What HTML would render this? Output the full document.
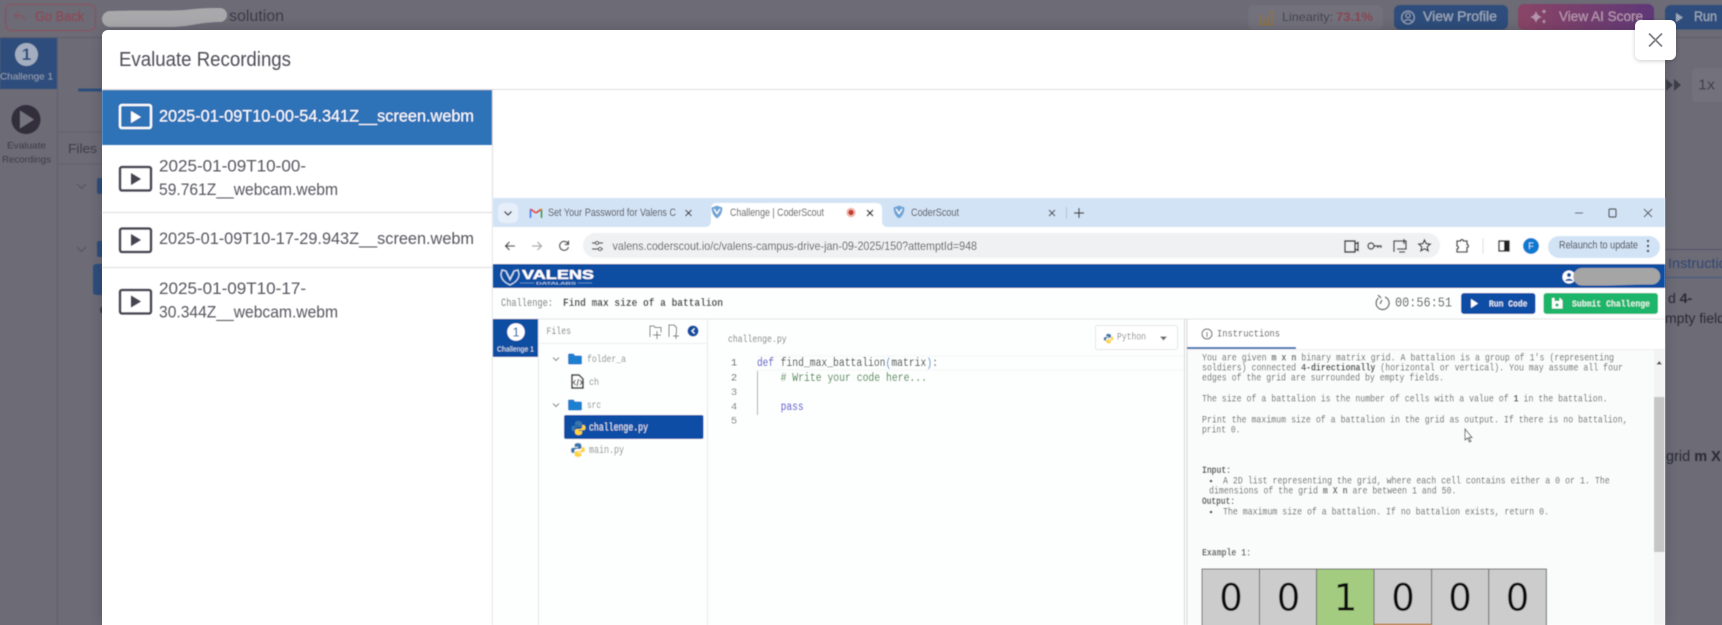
<!DOCTYPE html>
<html lang="en">
<head>
<meta charset="utf-8">
<title>Evaluate Recordings</title>
<style>
html,body{margin:0;padding:0;width:1722px;height:625px;overflow:hidden;background:#6c6b76}
svg{display:block}
text{font-family:"Liberation Sans",sans-serif;dominant-baseline:central;white-space:pre}
.m text,text.m{font-family:"Liberation Mono",monospace;transform:translateY(1px)}
.li{font-size:17px;fill:#56565f}
</style>
</head>
<body>
<svg xmlns="http://www.w3.org/2000/svg" width="1722" height="625" viewBox="0 0 1722 625">
<defs>
<filter id="b1" x="-2%" y="-2%" width="104%" height="104%"><feGaussianBlur stdDeviation="0.6"/></filter>
<filter id="b2" x="-2%" y="-2%" width="104%" height="104%"><feGaussianBlur stdDeviation="0.4"/></filter>
<filter id="sh" x="-5%" y="-10%" width="110%" height="120%"><feDropShadow dx="0" dy="0" stdDeviation="7" flood-color="#000" flood-opacity=".18"/></filter>
<filter id="shc" x="-40%" y="-40%" width="180%" height="180%"><feDropShadow dx="0" dy="1" stdDeviation="2.5" flood-color="#000" flood-opacity=".2"/></filter>
<linearGradient id="ai" x1="0" x2="1" y1="0" y2="0"><stop offset="0" stop-color="#8a4566"/><stop offset="1" stop-color="#5f3878"/></linearGradient>
<g id="py"><path fill="#3776ab" d="M8 1C5 1 4.500 2.200 4.500 3.500V5H8v.7H3C1.500 5.700 1 7 1 8.200S1.500 11 3 11h1.300V9.200c0-1.200 1-2.200 2.200-2.200h3.200c1 0 1.800-.8 1.800-1.800V3.500C11.500 2 10 1 8 1z"/><path fill="#ffd43b" d="M8 15c3 0 3.500-1.200 3.500-2.500V11H8v-.7h5c1.500 0 2-1.300 2-2.500S14.500 5 13 5h-1.300v1.800c0 1.200-1 2.200-2.200 2.200H6.300c-1 0-1.800.8-1.800 1.800v1.700C4.500 14 6 15 8 15z"/></g>
<path id="fold" d="M0 2a1.500 1.500 0 0 1 1.500-1.500h4L7 2.500h5.500A1.500 1.500 0 0 1 14 4v6a1.500 1.500 0 0 1-1.500 1.500h-11A1.500 1.500 0 0 1 0 10z" fill="#1c7fd0"/>
<g id="shield"><path d="M0-6.500L5.500-4.500C5.500 0 4 4 0 6.500C-4 4-5.500 0-5.500-4.500z" fill="#6ea5d6"/><path d="M-3-3L0 1.500L3-3" fill="none" stroke="#fff" stroke-width="1.200"/></g>
</defs>

<!-- dimmed page behind -->
<rect width="1722" height="625" fill="#6c6b76"/>
<g filter="url(#b2)">
<line x1="0" y1="37.500" x2="1722" y2="37.500" stroke="#5f5e69"/>
<rect x="5.500" y="4.500" width="90" height="26" rx="6" fill="none" stroke="#8f505c" stroke-width="1.100"/>
<path d="M25 20.500c-.5-3-2.500-5-6-5h-4M18 12l-3.500 3.500L18 19" fill="none" stroke="#8f505c" stroke-width="1"/>
<text x="35" y="16" font-size="14" fill="#8f4854" stroke="#8f4854" stroke-width=".2" textLength="49" lengthAdjust="spacingAndGlyphs">Go Back</text>
<text x="229" y="16.500" font-size="15.500" fill="#3c3b46" textLength="55" lengthAdjust="spacingAndGlyphs">solution</text>
<path d="M110 11C140 10 170 11 185 10C200 8 210 8 220 8a6.500 6.500 0 0 1 0 14C200 22 190 27 170 27H110a8 8 0 0 1 0-16z" fill="#a9a9ac"/>
<rect x="0" y="38" width="57" height="51" fill="#2f4d7c"/>
<circle cx="26.500" cy="54.500" r="11.500" fill="#a3aec0"/>
<text x="26.500" y="54.500" font-size="17" font-weight="700" fill="#2f4d7c" text-anchor="middle">1</text>
<text x="0" y="77" font-size="9.500" fill="#8f9cb1" textLength="53" lengthAdjust="spacingAndGlyphs">Challenge 1</text>
<line x1="57.500" y1="38" x2="57.500" y2="625" stroke="#62616c"/>
<circle cx="26" cy="119.500" r="14.500" fill="#302f3b"/>
<path d="M20 110.500L34 119.500L20 128.500z" fill="#75747f"/>
<text x="7" y="146" font-size="9.500" fill="#3d3c48" textLength="39" lengthAdjust="spacingAndGlyphs">Evaluate</text>
<text x="2" y="160" font-size="9.500" fill="#3d3c48" textLength="49" lengthAdjust="spacingAndGlyphs">Recordings</text>
<rect x="78" y="88.500" width="26" height="3" rx="1.500" fill="#2f4d7c"/>
<line x1="58" y1="132" x2="102" y2="132" stroke="#62616c"/>
<line x1="58" y1="164" x2="102" y2="164" stroke="#62616c"/>
<text x="68" y="148.500" font-size="13" fill="#3d3c48" textLength="29" lengthAdjust="spacingAndGlyphs">Files</text>
<path d="M77 184l4.500 4.500L86 184M77 247l4.500 4.500L86 247" fill="none" stroke="#55545f" stroke-width="1"/>
<rect x="97" y="178" width="8" height="16" rx="2" fill="#2f4d7c"/>
<rect x="97" y="241" width="8" height="16" rx="2" fill="#2f4d7c"/>
<rect x="93" y="264" width="14" height="31" rx="3" fill="#2f4d7c"/>
<circle cx="104" cy="310" r="4" fill="#3d3c48"/>
<!-- top right -->
<rect x="1248" y="5" width="135" height="25" rx="6" fill="#72717b"/>
<path d="M1260 14v10M1264 18v6M1268 15v9M1272 12v12M1258.500 24.500h15" fill="none" stroke="#8f7340" stroke-width="1.500"/>
<path d="M1270 12h4M1272 10v4" stroke="#8f7340" stroke-width="1"/>
<text x="1282" y="17" font-size="12" fill="#41404c" textLength="51" lengthAdjust="spacingAndGlyphs">Linearity:</text>
<text x="1336" y="17" font-size="12" font-weight="700" fill="#8a4350" textLength="37" lengthAdjust="spacingAndGlyphs">73.1%</text>
<rect x="1394" y="5" width="114" height="24.500" rx="6" fill="#2f4d7c"/>
<circle cx="1408" cy="17.500" r="6.300" fill="none" stroke="#9aa6b9" stroke-width="1.100"/>
<circle cx="1408" cy="15.500" r="2.200" fill="none" stroke="#9aa6b9"/>
<path d="M1404 22c1-3 7-3 8 0" fill="none" stroke="#9aa6b9"/>
<text x="1423" y="16.500" font-size="13.500" fill="#9aa6b9" stroke="#9aa6b9" stroke-width=".2" textLength="74" lengthAdjust="spacingAndGlyphs">View Profile</text>
<rect x="1518" y="4" width="136" height="26" rx="6" fill="url(#ai)"/>
<path d="M1536 11q1 5 6 6q-5 1-6 6q-1-5-6-6q5-1 6-6zM1544 9q.500 2 2.500 2.500q-2 .500-2.500 2.500q-.500-2-2.500-2.500q2-.500 2.500-2.500zM1544 19q.500 2 2 2.500q-1.500 .500-2 2.500q-.500-2-2-2.500q1.500-.500 2-2.500z" fill="#b595ad"/>
<text x="1559" y="16.500" font-size="13.500" fill="#b595ad" stroke="#b595ad" stroke-width=".2" textLength="84" lengthAdjust="spacingAndGlyphs">View AI Score</text>
<rect x="1665" y="5" width="70" height="24.500" rx="6" fill="#2f4d7c"/>
<path d="M1676 13l7 4.500l-7 4.500z" fill="#9aa6b9"/>
<text x="1694" y="16.500" font-size="13.500" fill="#9aa6b9" stroke="#9aa6b9" stroke-width=".2" textLength="23" lengthAdjust="spacingAndGlyphs">Run</text>
<path d="M1666 79l7 6l-7 6zM1674 79l7 6l-7 6z" fill="#3d3c48"/>
<rect x="1692" y="68" width="40" height="34" rx="4" fill="#72717b"/>
<text x="1698" y="85" font-size="15" fill="#3d3c48" textLength="17" lengthAdjust="spacingAndGlyphs">1x</text>
<line x1="1665" y1="249.500" x2="1722" y2="249.500" stroke="#54536a"/>
<line x1="1665" y1="277.500" x2="1722" y2="277.500" stroke="#3f5a86"/>
<text x="1668" y="263" font-size="14" fill="#33476f" textLength="74" lengthAdjust="spacingAndGlyphs">Instructions</text>
<text x="1668" y="298" font-size="14" fill="#2b2a36"><tspan>d </tspan><tspan font-weight="700">4-</tspan></text>
<text x="1665" y="318" font-size="14" fill="#2b2a36">mpty fields</text>
<text x="1666" y="457" font-size="14.500" fill="#2b2a36">grid <tspan font-weight="700">m X</tspan></text>
</g>

<!-- modal -->
<path d="M102 625V36a6 6 0 0 1 6-6H1665V625z" fill="#fff" filter="url(#sh)"/>
<g filter="url(#b2)">
<text x="119" y="60" font-size="20" fill="#4d4d57" textLength="172" lengthAdjust="spacingAndGlyphs">Evaluate Recordings</text>
<line x1="102" y1="89.500" x2="1665" y2="89.500" stroke="#dedede"/>
<line x1="492.500" y1="90" x2="492.500" y2="625" stroke="#dedede"/>
<rect x="102" y="90" width="390" height="55" fill="#2d72b8"/>
<line x1="102" y1="212.500" x2="492" y2="212.500" stroke="#dcdcdc"/>
<line x1="102" y1="267.500" x2="492" y2="267.500" stroke="#dcdcdc"/>
<!-- items -->
<rect x="120" y="105" width="31" height="23" rx="2" fill="none" stroke="#fff" stroke-width="2.300"/>
<path d="M131 111l10 6l-10 6z" fill="#fff"/>
<text class="li" style="fill:#fff" x="159" y="116" textLength="315" lengthAdjust="spacingAndGlyphs">2025-01-09T10-00-54.341Z__screen.webm</text>
<rect x="120" y="167" width="31" height="23.500" rx="2" fill="none" stroke="#44444f" stroke-width="2.300"/>
<path d="M131 173l10 6l-10 6z" fill="#44444f"/>
<text class="li" x="159" y="166" textLength="147" lengthAdjust="spacingAndGlyphs">2025-01-09T10-00-</text>
<text class="li" x="159" y="189.500" textLength="179" lengthAdjust="spacingAndGlyphs">59.761Z__webcam.webm</text>
<rect x="120" y="228.500" width="31" height="23.500" rx="2" fill="none" stroke="#44444f" stroke-width="2.300"/>
<path d="M131 234l10 6l-10 6z" fill="#44444f"/>
<text class="li" x="159" y="238.500" textLength="315" lengthAdjust="spacingAndGlyphs">2025-01-09T10-17-29.943Z__screen.webm</text>
<rect x="120" y="290" width="31" height="23.500" rx="2" fill="none" stroke="#44444f" stroke-width="2.300"/>
<path d="M131 295.500l10 6l-10 6z" fill="#44444f"/>
<text class="li" x="159" y="288.500" textLength="147" lengthAdjust="spacingAndGlyphs">2025-01-09T10-17-</text>
<text class="li" x="159" y="312" textLength="179" lengthAdjust="spacingAndGlyphs">30.344Z__webcam.webm</text>
</g>

<!-- video frame -->
<g filter="url(#b1)">
<rect x="493" y="198" width="1172" height="427" fill="#fdfefe"/>
<!-- tab strip -->
<rect x="493" y="198" width="1172" height="29" fill="#d3e3f6"/>
<rect x="498" y="203" width="20" height="20" rx="6" fill="#e6eef9"/>
<path d="M504.500 211.500l3.500 3.500l3.500-3.500" fill="none" stroke="#222" stroke-width="1.300"/>
<path d="M530.500 218v-9" stroke="#4285f4" stroke-width="2"/>
<path d="M541.500 218v-9" stroke="#34a853" stroke-width="2"/>
<path d="M530.500 209l5.500 4" stroke="#ea4335" stroke-width="2"/>
<path d="M536 213l5.500-4" stroke="#d5443a" stroke-width="2"/>
<path d="M541 208.500l.5 1" stroke="#fbbc04" stroke-width="2"/>
<text x="548" y="213" font-size="11" fill="#444" textLength="128" lengthAdjust="spacingAndGlyphs">Set Your Password for Valens C</text>
<path d="M685.500 210l6 6M691.500 210l-6 6" stroke="#333" stroke-width="1.200"/>
<path d="M705 227q6 0 6-6v-12q0-6 6-6h159q6 0 6 6v12q0 6 6 6z" fill="#fff"/>
<use href="#shield" x="717" y="212"/>
<text x="730" y="213" font-size="11" fill="#444" textLength="94" lengthAdjust="spacingAndGlyphs">Challenge | CoderScout</text>
<circle cx="851" cy="212.500" r="4.700" fill="#f0b8ae"/><circle cx="851" cy="212.500" r="2.700" fill="#c23a2b"/>
<path d="M867 210l6 6M873 210l-6 6" stroke="#222" stroke-width="1.300"/>
<use href="#shield" x="899" y="212"/>
<text x="911" y="213" font-size="11" fill="#444" textLength="48" lengthAdjust="spacingAndGlyphs">CoderScout</text>
<path d="M1049 210l6 6M1055 210l-6 6" stroke="#444" stroke-width="1.200"/>
<line x1="1066.500" y1="207" x2="1066.500" y2="219" stroke="#b5c2d2"/>
<path d="M1079 208v10M1074 213h10" stroke="#333" stroke-width="1.200"/>
<path d="M1575 213h8" stroke="#444"/>
<rect x="1609" y="209" width="7" height="8" rx="1" fill="none" stroke="#444" stroke-width="1.200"/>
<path d="M1644 209l8 8M1652 209l-8 8" stroke="#444"/>
<!-- toolbar -->
<rect x="493" y="227" width="1172" height="37" fill="#fff"/>
<path d="M515 246h-9M509.500 242l-4 4l4 4" fill="none" stroke="#444" stroke-width="1.300"/>
<path d="M532 246h9M537.500 242l4 4l-4 4" fill="none" stroke="#aaa" stroke-width="1.300"/>
<path d="M568 243.500a4.500 4.500 0 1 0 .500 3.500M568.500 240.500v4h-4" fill="none" stroke="#444" stroke-width="1.300"/>
<rect x="583" y="233" width="857" height="25" rx="12.500" fill="#eff1f3"/>
<path d="M592 243h3M599 243h4M592 249h6M601 249h2" stroke="#444" stroke-width="1.300"/>
<circle cx="597" cy="243" r="1.600" fill="none" stroke="#444"/>
<circle cx="600" cy="249" r="1.600" fill="none" stroke="#444"/>
<text x="612.500" y="246" font-size="12" fill="#555" textLength="364.500" lengthAdjust="spacingAndGlyphs">valens.coderscout.io/c/valens-campus-drive-jan-09-2025/150?attemptId=948</text>
<path d="M1345 241h10v11h-10zM1355 244l3-1.500v8l-3-1.500" fill="none" stroke="#333" stroke-width="1.400"/>
<circle cx="1371" cy="246" r="3" fill="none" stroke="#444" stroke-width="1.400"/>
<path d="M1374 246h7v2M1378 246v2" fill="none" stroke="#444" stroke-width="1.400"/>
<path d="M1394 252v-11h12v8h-9M1399 252h6M1404 239v5" fill="none" stroke="#333" stroke-width="1.300"/>
<path d="M1424.500 240l1.700 3.700l4 .4l-3 2.700l.9 4l-3.600-2.100l-3.600 2.100l.9-4l-3-2.700l4-.4z" fill="none" stroke="#333" stroke-width="1.300"/>
<path d="M1457 241h3.500a1.500 1.500 0 0 1 3 0h3.500v3.500a1.500 1.500 0 0 1 0 3v4.500h-10v-3a1.500 1.500 0 0 0 0-3z" fill="none" stroke="#222" stroke-width="1.300"/>
<line x1="1483" y1="238" x2="1483" y2="254" stroke="#ddd"/>
<rect x="1499" y="241" width="10" height="10" fill="none" stroke="#222" stroke-width="1.400"/>
<rect x="1504" y="241" width="5" height="10" fill="#222"/>
<circle cx="1531" cy="246" r="8" fill="#0b7ad1"/>
<text x="1531" y="246" font-size="9" fill="#cfe6fa" text-anchor="middle">F</text>
<rect x="1548" y="236" width="112" height="22" rx="11" fill="#d3e3f6"/>
<text x="1559" y="245.500" font-size="11" fill="#333" textLength="79" lengthAdjust="spacingAndGlyphs">Relaunch to update</text>
<circle cx="1648" cy="241" r="1.200" fill="#333"/><circle cx="1648" cy="246" r="1.200" fill="#333"/><circle cx="1648" cy="251" r="1.200" fill="#333"/>
<!-- app header -->
<rect x="493" y="264" width="1172" height="24" fill="#0c4ea2"/>
<path d="M502 270l4 1l4 8l4-8l4-1l1 4c0 6-5 9-9 11c-4-2-9-5-9-11z" fill="none" stroke="#cfe0f2" stroke-width="1.200"/>
<path d="M506 272l4 8l4-8" fill="none" stroke="#cfe0f2"/>
<text x="522" y="275" font-size="12.500" font-weight="700" fill="#fff" textLength="72" lengthAdjust="spacingAndGlyphs" stroke="#fff" stroke-width=".3">VALENS</text>
<line x1="520" y1="283" x2="592" y2="283" stroke="#9fbbdd" stroke-width=".6"/>
<rect x="534" y="281" width="44" height="4" fill="#0c4ea2"/>
<text x="536" y="283" font-size="4" fill="#cfe0f2" textLength="40" lengthAdjust="spacingAndGlyphs">DATALABS</text>
<circle cx="1569" cy="277" r="6.500" fill="#fff"/><circle cx="1569" cy="275" r="2" fill="#0c4ea2"/><path d="M1565 281c1-3 7-3 8 0z" fill="#0c4ea2"/>
<path d="M1582 268H1652a8 8 0 0 1 0 16.500c-25 0-30 1-50 1H1582a8.500 8.500 0 0 1 0-17.500z" fill="#a5a5a6"/>
<!-- challenge row -->
<rect x="1461" y="293" width="74.500" height="21" rx="3" fill="#0f4ea5"/>
<path d="M1471 299l7 4.500l-7 4.500z" fill="#fff"/>
<rect x="1543.500" y="293" width="114.500" height="21" rx="3" fill="#1fb56b"/>
<path d="M1552 298h8l2.500 2.500v8h-10.500z" fill="#fff"/><rect x="1554.500" y="298" width="5" height="3" fill="#1fb56b"/><circle cx="1557" cy="305" r="1.600" fill="#1fb56b"/>
<g class="m">
<text x="501" y="303" font-size="11" fill="#6a6a6a" textLength="52" lengthAdjust="spacingAndGlyphs">Challenge:</text>
<text x="563" y="303" font-size="11" font-weight="700" fill="#333" textLength="160" lengthAdjust="spacingAndGlyphs">Find max size of a battalion</text>
<text x="1395" y="302.500" font-size="14" fill="#444" textLength="57" lengthAdjust="spacingAndGlyphs">00:56:51</text>
<text x="1489" y="303" font-size="9.500" font-weight="700" fill="#dbe7f5" textLength="38.500" lengthAdjust="spacingAndGlyphs">Run Code</text>
<text x="1572" y="303" font-size="9.500" font-weight="700" fill="#dff6ea" textLength="78" lengthAdjust="spacingAndGlyphs">Submit Challenge</text>
</g>
<path d="M1385 297a6.500 6.500 0 1 1-6.500 1M1378 295l3 3M1382 300l-2 4" fill="none" stroke="#555" stroke-width="1.300"/>
<line x1="493" y1="319" x2="1665" y2="319" stroke="#e4e4e4"/>
<!-- app sidebar -->
<rect x="493" y="319" width="45" height="38" fill="#0c4ea2"/>
<circle cx="516" cy="332" r="8.800" fill="#fff"/>
<text x="516" y="332" font-size="13" fill="#0c4ea2" text-anchor="middle">1</text>
<text x="497" y="349" font-size="7.500" fill="#dbe7f5" textLength="37" lengthAdjust="spacingAndGlyphs">Challenge 1</text>
<line x1="538.500" y1="319" x2="538.500" y2="625" stroke="#e6e6e6"/>
<line x1="707.500" y1="319" x2="707.500" y2="625" stroke="#e9e9e9"/>
<line x1="539" y1="343.500" x2="707" y2="343.500" stroke="#eee"/>
<g class="m">
<text x="546.500" y="331" font-size="10.500" fill="#777" textLength="24.500" lengthAdjust="spacingAndGlyphs">Files</text>
<text x="587" y="359" font-size="10.500" fill="#888" textLength="39" lengthAdjust="spacingAndGlyphs">folder_a</text>
<text x="589" y="382" font-size="10.500" fill="#888" textLength="10" lengthAdjust="spacingAndGlyphs">ch</text>
<text x="587" y="405" font-size="10.500" fill="#888" textLength="14" lengthAdjust="spacingAndGlyphs">src</text>
</g>
<path d="M650 337v-11h4l1 1.500h6v5M653 335h8M657 331v8" fill="none" stroke="#666" stroke-width="1"/>
<path d="M669 337v-12h5l2.500 2.500v6M673 336h6M676 333v6" fill="none" stroke="#666" stroke-width="1"/>
<circle cx="693" cy="331" r="5.500" fill="#0c4ea2"/><path d="M694.500 328.500l-2.500 2.500l2.500 2.500" fill="none" stroke="#fff" stroke-width="1.200"/>
<path d="M553 357.500l3 3l3-3M553 403.500l3 3l3-3" fill="none" stroke="#777" stroke-width="1"/>
<use href="#fold" x="568" y="353"/>
<use href="#fold" x="568" y="399"/>
<path d="M572 375h7l4 4v9h-11z" fill="#fff" stroke="#222" stroke-width="1.500"/>
<path d="M575.500 380l-2 2.500l2 2.500M580 380l2 2.500l-2 2.500M578.500 379l-1.500 7" fill="none" stroke="#222" stroke-width="1"/>
<rect x="564" y="415" width="139.500" height="24" rx="2" fill="#0f4ea5"/>
<use href="#py" transform="translate(570.500 420)"/>
<use href="#py" transform="translate(570 442)"/>
<g class="m">
<text x="589" y="427.500" font-size="11" fill="#e8eff8" textLength="59" lengthAdjust="spacingAndGlyphs">challenge.py</text>
<text x="589" y="450" font-size="11" fill="#888" textLength="35" lengthAdjust="spacingAndGlyphs">main.py</text>
<!-- editor -->
<text x="728" y="339" font-size="10.500" fill="#777" textLength="58.600" lengthAdjust="spacingAndGlyphs">challenge.py</text>
<text x="734" y="362.500" font-size="10.500" fill="#444" text-anchor="middle">1</text>
<text x="734" y="377.500" font-size="10.500" fill="#555" text-anchor="middle">2</text>
<text x="734" y="392" font-size="10.500" fill="#777" text-anchor="middle">3</text>
<text x="734" y="406.500" font-size="10.500" fill="#777" text-anchor="middle">4</text>
<text x="734" y="420.500" font-size="10.500" fill="#777" text-anchor="middle">5</text>
<text x="757" y="362.500" font-size="11.500" fill="#3030c0" textLength="17" lengthAdjust="spacingAndGlyphs">def</text>
<text x="780.600" y="362.500" font-size="11.500" fill="#222" textLength="157.400" lengthAdjust="spacingAndGlyphs">find_max_battalion<tspan fill="#3a7bd0">(</tspan>matrix<tspan fill="#3a7bd0">)</tspan>:</text>
<text x="780.600" y="377.500" font-size="11.500" fill="#2c7a2c" textLength="146.400" lengthAdjust="spacingAndGlyphs"># Write your code here...</text>
<text x="780.600" y="406.500" font-size="11.500" fill="#2020c8" textLength="23" lengthAdjust="spacingAndGlyphs">pass</text>
</g>
<path d="M757 356H1186M757 370H1186" stroke="#f4f4f4"/>
<line x1="757.500" y1="371" x2="757.500" y2="415" stroke="#aaa"/>
<!-- python select -->
<rect x="1095.500" y="325.500" width="82" height="24" rx="2" fill="#fff" stroke="#e6e6e6"/>
<use href="#py" transform="translate(1103 333) scale(.7)"/>
<text class="m" x="1117" y="337" font-size="10" fill="#888" textLength="29" lengthAdjust="spacingAndGlyphs">Python</text>
<path d="M1160 336.500h7l-3.500 4z" fill="#666"/>
<!-- instructions -->
<rect x="1187" y="320" width="478" height="305" fill="#fafbfb"/>
<rect x="1187" y="320" width="478" height="29" fill="#fff"/>
<path d="M1184.500 319V625M1187 319V625" stroke="#d5d5d5"/>
<line x1="1187" y1="349.500" x2="1665" y2="349.500" stroke="#eee"/>
<line x1="1187" y1="348" x2="1296" y2="348" stroke="#376fb5" stroke-width="2"/>
<circle cx="1207" cy="334" r="5" fill="none" stroke="#555"/><path d="M1207 332v5" stroke="#555"/>
<g class="m" font-size="10.500">
<text x="1217" y="333.500" fill="#444" textLength="63" lengthAdjust="spacingAndGlyphs">Instructions</text>
<text x="1202" y="357.500" fill="#5c5c5c" textLength="412" lengthAdjust="spacingAndGlyphs">You are given <tspan font-weight="700">m x n</tspan> binary matrix grid. A battalion is a group of 1's (representing</text>
<text x="1202" y="367.500" fill="#5c5c5c" textLength="421" lengthAdjust="spacingAndGlyphs">soldiers) connected <tspan font-weight="700" fill="#333">4-directionally</tspan> (horizontal or vertical). You may assume all four</text>
<text x="1202" y="377.500" fill="#5c5c5c" textLength="242" lengthAdjust="spacingAndGlyphs">edges of the grid are surrounded by empty fields.</text>
<text x="1202" y="398.500" fill="#5c5c5c" textLength="405.600" lengthAdjust="spacingAndGlyphs">The size of a battalion is the number of cells with a value of <tspan font-weight="700" fill="#333">1</tspan> in the battalion.</text>
<text x="1202" y="419.500" fill="#5c5c5c" textLength="425.600" lengthAdjust="spacingAndGlyphs">Print the maximum size of a battalion in the grid as output. If there is no battalion,</text>
<text x="1202" y="429.500" fill="#5c5c5c" textLength="38.500" lengthAdjust="spacingAndGlyphs">print 0.</text>
<text x="1202" y="470" font-weight="700" fill="#444" textLength="29" lengthAdjust="spacingAndGlyphs">Input:</text>
<text x="1223" y="480.500" fill="#5c5c5c" textLength="386.700" lengthAdjust="spacingAndGlyphs">A 2D list representing the grid, where each cell contains either a 0 or 1. The</text>
<text x="1209" y="490.500" fill="#5c5c5c" textLength="247.500" lengthAdjust="spacingAndGlyphs">dimensions of the grid <tspan font-weight="700">m X n</tspan> are between 1 and 50.</text>
<text x="1202" y="501" font-weight="700" fill="#444" textLength="33" lengthAdjust="spacingAndGlyphs">Output:</text>
<text x="1223" y="511.500" fill="#5c5c5c" textLength="326" lengthAdjust="spacingAndGlyphs">The maximum size of a battalion. If no battalion exists, return 0.</text>
<text x="1202" y="552.500" font-weight="700" fill="#555" textLength="49" lengthAdjust="spacingAndGlyphs">Example 1:</text>
</g>
<circle cx="1211" cy="481" r="1.300" fill="#444"/><circle cx="1211" cy="512" r="1.300" fill="#444"/>
<!-- table -->
<rect x="1202" y="569" width="344.400" height="58" fill="#cccccc" stroke="#666"/>
<rect x="1316.500" y="569" width="57.500" height="58" fill="#a3cc80" stroke="#666"/>
<path d="M1259.500 569V625M1431.600 569V625M1488.700 569V625" stroke="#666"/>
<line x1="1374" y1="624.500" x2="1431.600" y2="624.500" stroke="#b8792a" stroke-width="1.500"/>
<g font-size="37" fill="#111" text-anchor="middle">
<text style="font-family:'DejaVu Sans',sans-serif" x="1231" y="598">0</text>
<text style="font-family:'DejaVu Sans',sans-serif" x="1288.500" y="598">0</text>
<text style="font-family:'DejaVu Sans',sans-serif" x="1345.500" y="598">1</text>
<text style="font-family:'DejaVu Sans',sans-serif" x="1403" y="598">0</text>
<text style="font-family:'DejaVu Sans',sans-serif" x="1460" y="598">0</text>
<text style="font-family:'DejaVu Sans',sans-serif" x="1517.500" y="598">0</text>
</g>
<!-- scrollbar -->
<rect x="1654" y="350" width="10.500" height="275" fill="#f3f3f3"/>
<path d="M1656.500 364.500h5.500l-2.750-3.500z" fill="#444"/>
<rect x="1654" y="397" width="10.500" height="155" fill="#c6c6c6"/>
<!-- cursor -->
<path d="M1465 429v11l2.500-2l2 4l1.500-.8l-2-3.700h3z" fill="#fff" stroke="#444" stroke-width=".9"/>
</g>

<!-- close button -->
<rect x="1635" y="20" width="41" height="40" rx="6" fill="#fff" filter="url(#shc)"/>
<path d="M1649 33.500l13 13M1662 33.500l-13 13" stroke="#85858b" stroke-width="1.900" fill="none"/>
</svg>
</body>
</html>
